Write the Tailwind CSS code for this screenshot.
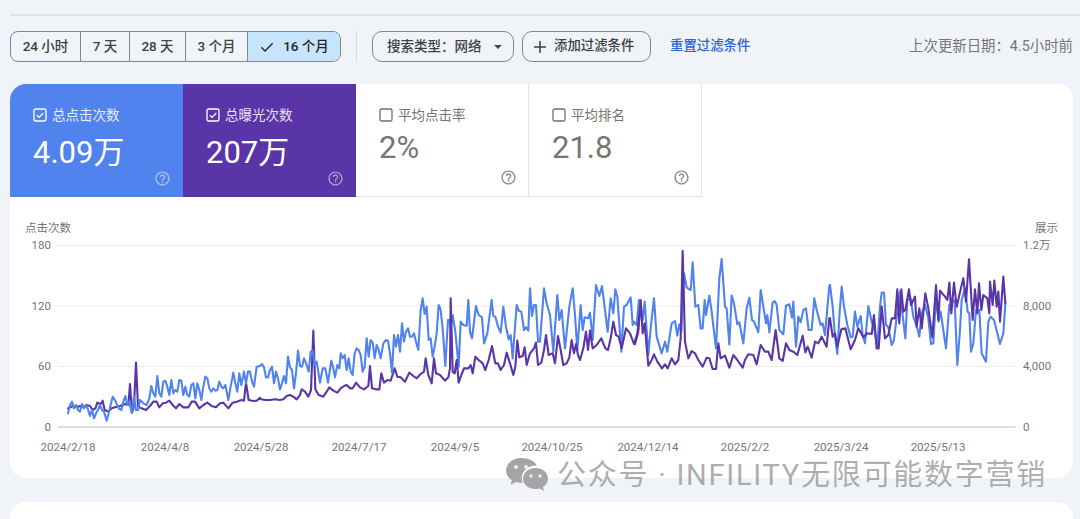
<!DOCTYPE html>
<html lang="zh">
<head>
<meta charset="utf-8">
<script src="https://cdn.jsdelivr.net/npm/@tailwindcss/browser@4"></script>
</head>
<body class="m-0">
<div class="relative w-[1080px] h-[519px] overflow-hidden bg-[#f0f4f9] font-['Roboto','Noto_Sans_CJK_SC',sans-serif]">
  <div class="pt-[14px] pl-[10px]"><div class="h-[2px] bg-[#dde1e6]"></div></div>

  <div class="flex items-center h-[31px] mt-[15px] ml-[10px] mr-[7px]">
    <div class="flex h-[31px] w-[331px] rounded-[8px] border border-[#80868b] overflow-hidden text-[13.5px] text-[#3c4043] font-medium">
      <div class="w-[70px] flex items-center justify-center border-r border-[#80868b]">24 小时</div>
      <div class="w-[49px] flex items-center justify-center border-r border-[#80868b]">7 天</div>
      <div class="w-[56px] flex items-center justify-center border-r border-[#80868b]">28 天</div>
      <div class="w-[62px] flex items-center justify-center border-r border-[#80868b]">3 个月</div>
      <div class="flex-1 flex items-center justify-center gap-[8px] bg-[#c6e4fb] text-[#1f2328]">
        <svg class="w-[16px] h-[16px]" viewBox="0 0 24 24" fill="none" stroke="#202124" stroke-width="2"><path d="M3.500 12.500l5.500 5.500L20.500 6.500"/></svg>
        <span>16 个月</span>
      </div>
    </div>
    <div class="w-px h-[31px] bg-[#dadce0] ml-[15px]"></div>
    <div class="flex items-center h-[31px] w-[142px] ml-[15px] pl-[14px] rounded-[10px] border border-[#80868b] text-[13.5px] text-[#3c4043] font-medium">
      <span>搜索类型：网络</span>
      <svg class="ml-[12px] w-[8px] h-[4px]" viewBox="0 0 8 4"><path d="M0 0h8L4 4z" fill="#444746"/></svg>
    </div>
    <div class="flex items-center h-[31px] w-[129px] ml-[8px] pl-[10px] rounded-[10px] border border-[#80868b] text-[13.4px] text-[#3c4043] font-medium">
      <svg class="w-[14px] h-[14px]" viewBox="0 0 14 14" fill="none" stroke="#3c4043" stroke-width="1.500"><path d="M7 1v12M1 7h12"/></svg>
      <span class="ml-[7px]">添加过滤条件</span>
    </div>
    <div class="ml-[19px] text-[13.4px] font-medium text-[#2f62d3]">重置过滤条件</div>
    <div class="ml-auto text-[14.4px] text-[#757575]">上次更新日期：4.5小时前</div>
  </div>

  <div class="mt-[22px] ml-[10px] mr-[7px] bg-white rounded-[16px] h-[394px] overflow-hidden">
    <div class="flex h-[113px]">
      <div class="relative w-[173px] bg-[#5083ed] text-white pl-[23px] pt-[23px]">
        <div class="flex items-center gap-[5px] text-[13.5px] leading-[16px] text-white/85">
          <svg class="w-[14px] h-[14px]" viewBox="0 0 14 14" fill="none" stroke="white"><rect x="1" y="1" width="12" height="12" rx="1.500" stroke-width="1.300"/><path d="M3.800 7.200l2.300 2.200 4.200-4.400" stroke-width="1.200"/></svg>
          <span>总点击次数</span>
        </div>
        <div class="mt-[8px] text-[31px] leading-[44px]">4.09万</div>
        <svg class="absolute right-[12px] bottom-[10px] w-[17px] h-[17px]" viewBox="0 0 24 24" fill="#ffffff" opacity=".5"><path d="M11 18h2v-2h-2v2zm1-16C6.480 2 2 6.480 2 12s4.480 10 10 10 10-4.480 10-10S17.520 2 12 2zm0 18c-4.410 0-8-3.590-8-8s3.590-8 8-8 8 3.590 8 8-3.590 8-8 8zm0-14c-2.210 0-4 1.790-4 4h2c0-1.100.9-2 2-2s2 .9 2 2c0 2-3 1.750-3 5h2c0-2.250 3-2.500 3-5 0-2.210-1.790-4-4-4z"/></svg>
      </div>
      <div class="relative w-[173px] bg-[#5935a8] text-white pl-[23px] pt-[23px]">
        <div class="flex items-center gap-[5px] text-[13.5px] leading-[16px] text-white/85">
          <svg class="w-[14px] h-[14px]" viewBox="0 0 14 14" fill="none" stroke="white"><rect x="1" y="1" width="12" height="12" rx="1.500" stroke-width="1.300"/><path d="M3.800 7.200l2.300 2.200 4.200-4.400" stroke-width="1.200"/></svg>
          <span>总曝光次数</span>
        </div>
        <div class="mt-[8px] text-[31px] leading-[44px]">207万</div>
        <svg class="absolute right-[12px] bottom-[10px] w-[17px] h-[17px]" viewBox="0 0 24 24" fill="#ffffff" opacity=".5"><path d="M11 18h2v-2h-2v2zm1-16C6.480 2 2 6.480 2 12s4.480 10 10 10 10-4.480 10-10S17.520 2 12 2zm0 18c-4.410 0-8-3.590-8-8s3.590-8 8-8 8 3.590 8 8-3.590 8-8 8zm0-14c-2.210 0-4 1.790-4 4h2c0-1.100.9-2 2-2s2 .9 2 2c0 2-3 1.750-3 5h2c0-2.250 3-2.500 3-5 0-2.210-1.790-4-4-4z"/></svg>
      </div>
      <div class="relative w-[173px] border-r border-b border-[#e3e3e3] pl-[23px] pt-[23px] text-[#757575]">
        <div class="flex items-center gap-[5px] text-[13.5px] leading-[16px]">
          <svg class="w-[14px] h-[14px]" viewBox="0 0 14 14" fill="none" stroke="#6f6f6f"><rect x="1" y="1" width="12" height="12" rx="1.500" stroke-width="1.300"/></svg>
          <span>平均点击率</span>
        </div>
        <div class="mt-[3px] text-[31px] leading-[44px]">2%</div>
        <svg class="absolute right-[11px] bottom-[10px] w-[17px] h-[17px]" viewBox="0 0 24 24" fill="#8a8a8a"><path d="M11 18h2v-2h-2v2zm1-16C6.480 2 2 6.480 2 12s4.480 10 10 10 10-4.480 10-10S17.520 2 12 2zm0 18c-4.410 0-8-3.590-8-8s3.590-8 8-8 8 3.590 8 8-3.590 8-8 8zm0-14c-2.210 0-4 1.790-4 4h2c0-1.100.9-2 2-2s2 .9 2 2c0 2-3 1.750-3 5h2c0-2.250 3-2.500 3-5 0-2.210-1.790-4-4-4z"/></svg>
      </div>
      <div class="relative w-[173px] border-r border-b border-[#e3e3e3] pl-[23px] pt-[23px] text-[#757575]">
        <div class="flex items-center gap-[5px] text-[13.5px] leading-[16px]">
          <svg class="w-[14px] h-[14px]" viewBox="0 0 14 14" fill="none" stroke="#6f6f6f"><rect x="1" y="1" width="12" height="12" rx="1.500" stroke-width="1.300"/></svg>
          <span>平均排名</span>
        </div>
        <div class="mt-[3px] text-[31px] leading-[44px]">21.8</div>
        <svg class="absolute right-[11px] bottom-[10px] w-[17px] h-[17px]" viewBox="0 0 24 24" fill="#8a8a8a"><path d="M11 18h2v-2h-2v2zm1-16C6.480 2 2 6.480 2 12s4.480 10 10 10 10-4.480 10-10S17.520 2 12 2zm0 18c-4.410 0-8-3.590-8-8s3.590-8 8-8 8 3.590 8 8-3.590 8-8 8zm0-14c-2.210 0-4 1.790-4 4h2c0-1.100.9-2 2-2s2 .9 2 2c0 2-3 1.750-3 5h2c0-2.250 3-2.500 3-5 0-2.210-1.790-4-4-4z"/></svg>
      </div>
    </div>

    <svg class="block" width="1063" height="281" viewBox="10 197 1063 281" fill="#757575" font-size="11.5">
      <g stroke="#eeeeee" stroke-width="1">
        <path d="M58 245.500H1016M58 306H1016M58 366.500H1016"/>
      </g>
      <path d="M58 427H1016" stroke="#bdbdbd" stroke-width="1.200"/>
      <text x="25" y="232" font-size="11.5">点击次数</text>
      <text x="1058" y="232" text-anchor="end" font-size="11.5">展示</text>
      <g text-anchor="end">
        <text x="51" y="249">180</text><text x="51" y="310">120</text><text x="51" y="370">60</text><text x="51" y="431">0</text>
      </g>
      <g>
        <text x="1023" y="249">1.2万</text><text x="1023" y="310">8,000</text><text x="1023" y="370">4,000</text><text x="1023" y="431">0</text>
      </g>
      <g text-anchor="middle">
        <text x="68" y="451">2024/2/18</text><text x="165" y="451">2024/4/8</text><text x="261" y="451">2024/5/28</text><text x="359" y="451">2024/7/17</text><text x="455" y="451">2024/9/5</text><text x="552" y="451">2024/10/25</text><text x="648" y="451">2024/12/14</text><text x="745" y="451">2025/2/2</text><text x="841" y="451">2025/3/24</text><text x="938" y="451">2025/5/13</text>
      </g>

      <g fill="none" stroke-linejoin="round" stroke-linecap="round" stroke-width="6.300">
        <g transform="translate(60 330) scale(.33333)">
          <polyline stroke="#5935a8" points="24,235 30,232 40,228 50,232 60,228 70,232 80,225 90,228 98,240 106,235 112,218 122,222 128,212 134,240 145,245 155,235 165,232 180,228 195,222 205,225 210,162 216,248 222,228 228,98 234,230 245,235 258,240 270,228 280,215 290,215 298,232 308,220 318,218 328,212 338,225 348,235 358,222 370,232 385,232 395,215 405,215 418,235 430,225 442,218 455,228 468,232 480,220 490,218 505,235 518,218 530,215 545,210 552,212 558,158 566,210 580,213 590,212 600,203"/>
          <polyline stroke="#5083ed" points="24,250 30,225 36,215 42,235 48,225 54,240 60,245 66,222 72,235 78,225 84,238 90,258 96,240 102,265 108,250 114,240 120,225 126,240 132,245 140,272 146,250 158,200 166,212 176,235 184,240 190,215 196,198 202,225 208,215 215,248 222,200 228,240 234,240 240,210 250,220 260,225 268,205 274,168 280,190 286,200 292,138 298,190 304,200 310,155 316,152 322,170 328,195 334,150 340,190 346,180 352,185 358,150 364,152 370,195 376,170 382,195 388,200 394,165 400,160 406,205 412,160 418,180 424,210 430,170 436,140 442,145 448,175 454,185 460,175 466,182 472,180 478,155 484,170 490,175 496,165 505,210 512,170 520,128 526,160 532,185 538,130 544,165 552,125 558,160 564,125 570,125 576,155 582,170 590,110 600,108"/>
        </g>
        <g transform="translate(250 290) scale(.33333)">
          <polyline stroke="#5935a8" points="30,327 45,330 60,330 75,328 90,330 100,328 110,318 120,315 130,320 140,328 150,315 155,298 165,305 175,320 183,300 190,122 196,298 206,315 220,320 230,305 238,292 250,302 262,308 272,295 282,288 290,285 300,295 308,295 318,278 330,292 342,298 355,288 360,228 366,295 378,298 388,298 394,250 402,278 412,270 422,272 434,235 442,260 452,262 465,275 478,248 490,258 500,265 512,252 522,245 527,205 535,255 545,280 552,205 558,250 570,255 585,272 595,262 600,235"/>
          <polyline stroke="#5083ed" points="30,228 36,222 42,232 48,262 54,262 60,240 66,230 72,280 78,245 84,265 90,298 96,280 102,258 108,280 114,200 120,232 126,240 132,295 138,250 144,182 150,228 156,230 162,205 170,225 176,245 182,185 188,182 194,225 200,215 210,278 218,235 226,235 234,278 244,212 250,235 255,262 262,225 268,235 272,190 278,205 284,195 290,240 296,205 302,245 308,255 314,190 320,175 326,180 332,195 338,245 344,230 350,145 356,200 362,150 368,158 374,205 380,165 386,180 392,205 400,160 408,150 414,152 420,190 426,248 432,135 438,170 444,135 450,185 456,100 462,155 468,125 474,115 480,140 486,140 492,130 498,155 505,180 512,60 518,25 524,72 530,50 536,150 542,145 548,200 554,170 560,130 566,45 572,60 578,115 586,228 594,90 600,90"/>
        </g>
        <g transform="translate(440 270) scale(.33333)">
          <polyline stroke="#5083ed" points="30,150 32,175 38,135 46,185 56,290 62,155 70,165 80,168 85,90 90,185 96,205 108,108 116,135 126,142 132,220 142,190 155,90 160,138 166,140 174,170 182,188 190,110 198,170 206,208 212,195 218,265 230,105 236,122 244,125 252,180 258,172 265,182 270,55 276,138 282,105 288,105 294,215 300,215 312,55 320,100 330,135 340,245 352,75 358,150 365,120 375,235 388,110 398,55 405,135 412,240 422,105 428,180 434,142 444,145 450,128 458,210 468,45 478,78 486,48 495,120 503,185 512,85 520,130 526,58 532,80 544,245 552,110 560,105 572,82 578,165 582,155 590,165 597,90 600,95"/>
          <polyline stroke="#5935a8" points="30,295 32,85 38,305 44,310 50,270 56,338 64,315 72,295 85,295 92,285 98,310 106,260 116,270 128,280 136,300 146,270 156,228 166,280 174,280 182,300 192,285 200,248 210,280 220,315 226,290 232,212 238,262 248,258 254,232 260,285 270,250 282,235 288,218 294,285 304,278 312,240 318,195 326,255 338,250 345,280 354,198 362,240 370,285 380,280 388,262 395,210 402,250 408,222 414,255 420,270 430,235 438,185 444,240 450,182 458,235 470,225 484,205 496,235 504,240 512,205 520,155 528,195 536,200 545,235 558,175 570,190 582,222 592,190 600,120"/>
        </g>
        <g transform="translate(630 245) scale(.33333)">
          <polyline stroke="#5083ed" points="30,170 38,225 44,170 55,330 62,250 72,160 80,275 95,325 105,290 112,320 125,235 135,228 142,272 148,238 154,260 162,85 170,128 182,135 188,52 196,185 205,180 212,250 218,250 224,165 228,210 238,152 245,200 258,310 268,100 275,42 285,185 290,190 298,298 305,152 312,175 322,238 328,232 340,295 350,190 358,158 366,225 372,230 385,262 392,135 400,185 408,235 412,210 418,262 428,172 434,168 440,180 448,255 460,268 468,182 478,178 486,218 490,170 498,305 505,215 512,232 520,195 528,190 536,255 545,255 553,160 560,195 572,240 578,235 585,270 598,122 600,120"/>
          <polyline stroke="#5935a8" points="15,298 25,260 32,165 38,265 44,235 55,362 65,345 72,328 82,350 96,370 105,358 113,370 125,340 135,358 145,345 152,280 158,18 165,290 175,340 185,318 195,325 205,345 218,365 230,338 238,340 248,372 258,372 265,295 272,340 285,332 298,368 310,330 322,345 338,368 345,345 355,328 370,330 380,358 392,300 405,320 415,320 425,345 437,255 448,340 458,348 468,295 478,315 490,320 502,330 518,272 526,322 533,305 545,338 555,290 565,295 575,275 590,305 598,220 600,220"/>
        </g>
        <g transform="translate(820 250) scale(.33333)">
          <polyline stroke="#5083ed" points="30,105 38,170 45,260 52,312 58,200 65,110 72,170 82,225 92,262 98,260 105,185 112,230 122,198 128,255 135,280 145,168 155,215 162,235 172,290 180,170 185,128 192,128 198,225 205,232 215,285 222,270 232,185 240,125 246,180 256,265 262,150 272,145 280,200 292,235 298,260 305,190 315,165 325,205 333,282 340,280 348,140 356,215 362,185 372,255 378,295 388,165 398,155 404,150 412,345 420,240 425,150 435,115 443,185 448,190 453,305 460,280 468,180 478,180 485,310 498,335 505,215 512,200 522,210 532,250 540,282 550,250 556,160"/>
          <polyline stroke="#5935a8" points="30,205 38,260 45,250 52,290 64,238 76,235 92,298 105,270 115,235 130,262 142,250 155,252 162,195 170,295 176,295 185,170 195,265 205,255 215,205 225,205 232,118 238,220 244,118 250,185 256,180 267,118 273,165 285,140 290,230 298,175 305,235 316,130 325,175 337,262 348,105 355,210 360,122 375,140 382,150 388,98 394,190 402,98 410,170 425,105 430,85 438,155 447,28 458,210 465,118 472,190 477,100 484,180 490,135 502,145 508,190 510,95 518,165 523,92 530,170 535,125 540,215 550,80 556,160"/>
        </g>
      </g>
    </svg>
  </div>

  <div class="mt-[24px] ml-[10px] mr-[7px] h-[40px] bg-white rounded-[16px]"></div>

  <div class="absolute left-[505px] top-[457px] flex items-center">
    <svg class="w-[44px] h-[36px]" viewBox="0 0 44 36">
      <path d="M16 1C7.500 1 1 6.700 1 13.500c0 4 2.200 7.300 5.800 9.700L5.500 28l5.300-3c1.600.5 3.400.8 5.200.8.500 0 1 0 1.500-.1C17 24 16.800 22.500 16.800 21c0-7 6.500-12.500 14.200-12.500.300 0 .600 0 .900 0C30 4 23.500 1 16 1z" fill="#a5a5a5"/>
      <path d="M30.500 11C23.300 11 18 15.700 18 21.500S23.300 32 30.500 32c1.400 0 2.800-.2 4.200-.6L39 34l-1-4c3.400-2.200 5-5.200 5-8.500C43 15.700 37.700 11 30.500 11z" fill="#a5a5a5"/>
      <circle cx="11" cy="10" r="2" fill="#ececec"/><circle cx="21" cy="10" r="2" fill="#ececec"/>
      <circle cx="26" cy="19" r="1.700" fill="#ececec"/><circle cx="35" cy="19" r="1.700" fill="#ececec"/>
    </svg>
    <span class="ml-[8px] text-[29px] leading-[36px] tracking-[1.75px] whitespace-nowrap text-[#8a8a8a]/70">公众号 · INFILITY无限可能数字营销</span>
  </div>
</div>
</body>
</html>
